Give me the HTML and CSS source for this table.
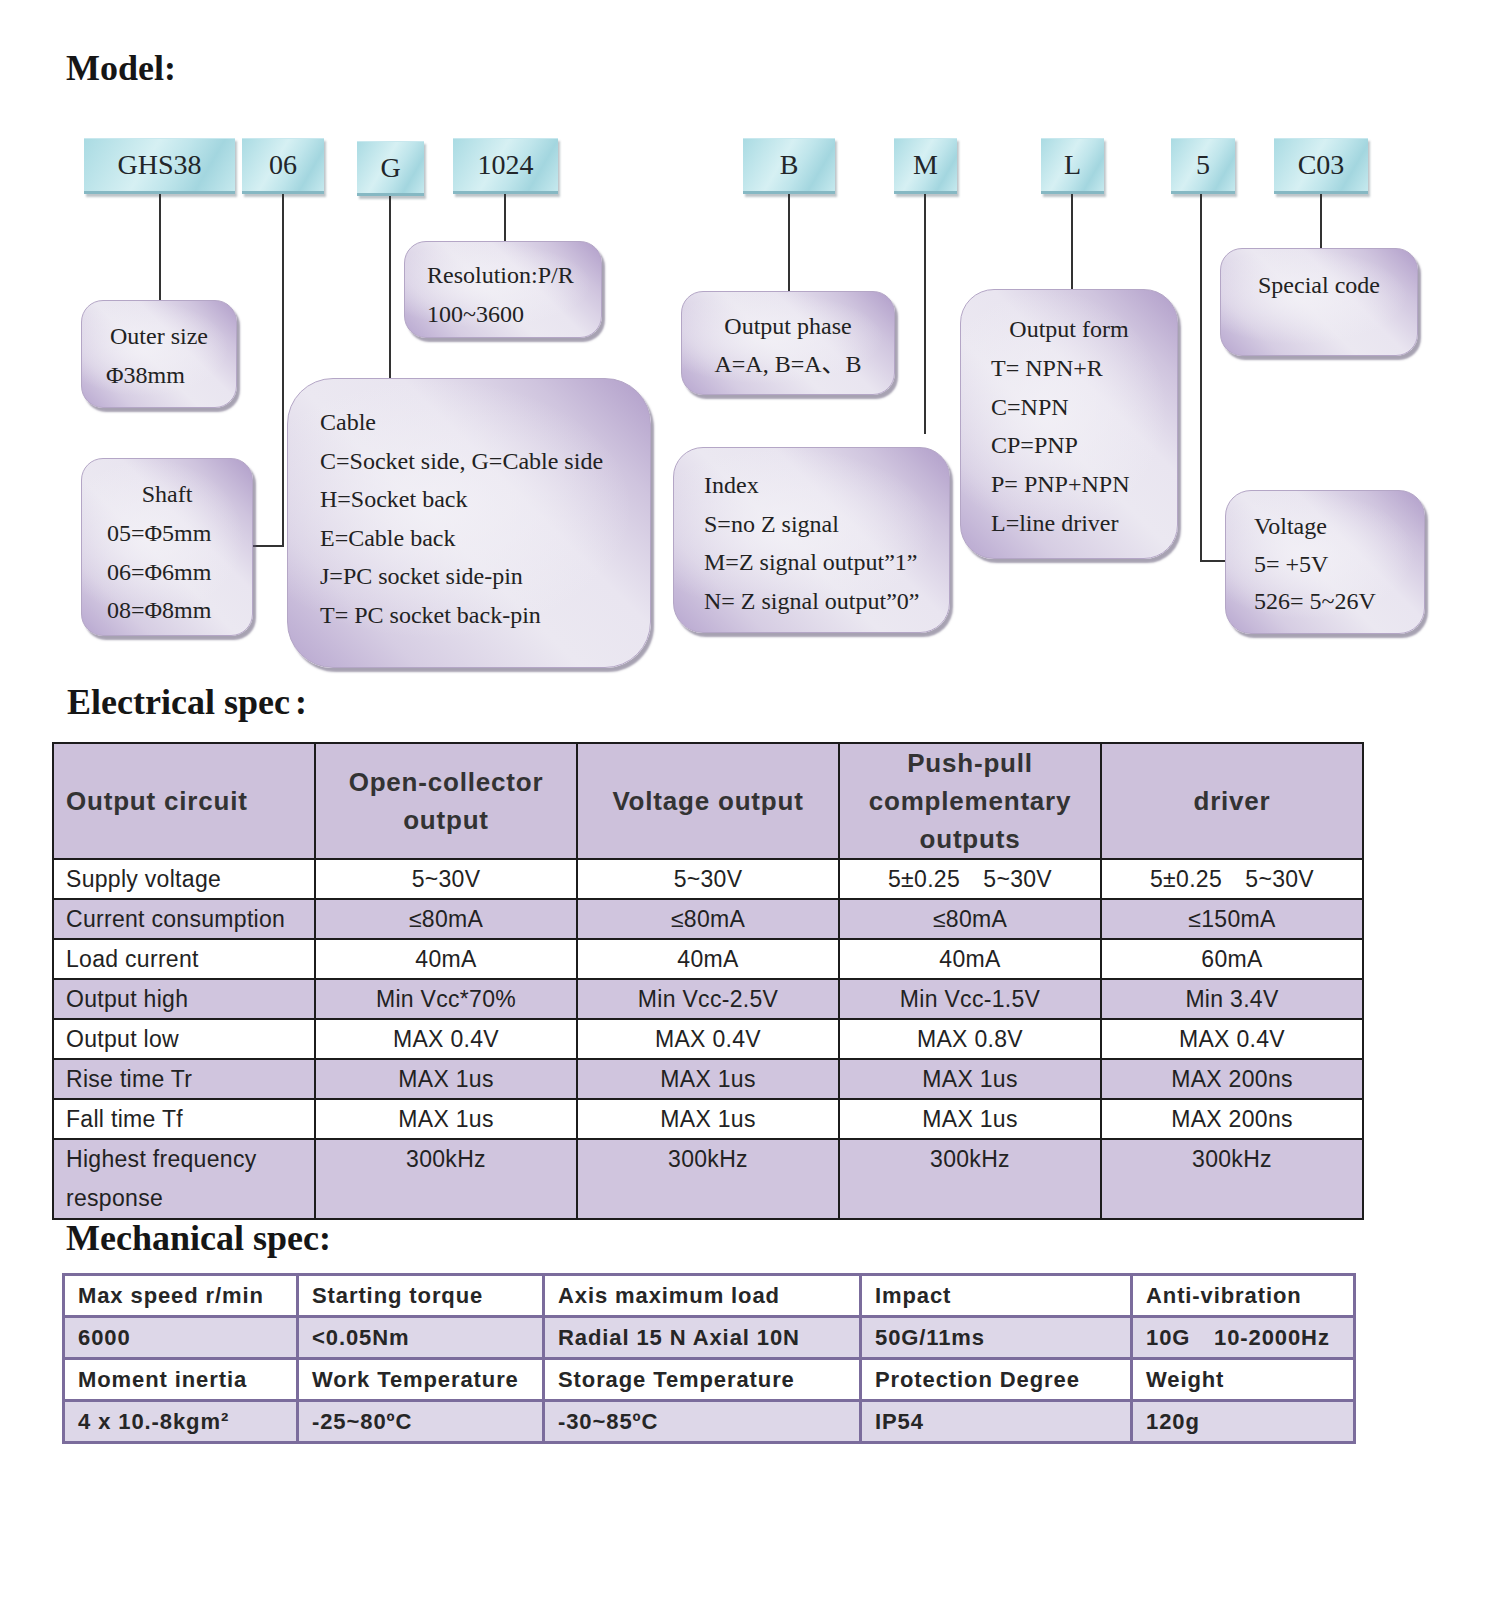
FILE: index.html
```html
<!DOCTYPE html>
<html lang="en">
<head>
<meta charset="utf-8">
<title>GHS38 encoder</title>
<link rel="stylesheet" href="styles.css">
</head>
<body>
<main class="page">
  <h1 class="heading heading-model">Model:</h1>

  <section class="diagram">
    <div class="code code-ghs">GHS38</div>
    <div class="code code-06">06</div>
    <div class="code code-g">G</div>
    <div class="code code-1024">1024</div>
    <div class="code code-b">B</div>
    <div class="code code-m">M</div>
    <div class="code code-l">L</div>
    <div class="code code-5">5</div>
    <div class="code code-c03">C03</div>

    <div class="vline vl-ghs"></div>
    <div class="vline vl-06"></div>
    <div class="hline hl-06"></div>
    <div class="vline vl-g"></div>
    <div class="vline vl-1024"></div>
    <div class="vline vl-b"></div>
    <div class="vline vl-m"></div>
    <div class="vline vl-l"></div>
    <div class="vline vl-5"></div>
    <div class="hline hl-5"></div>
    <div class="vline vl-c03"></div>

    <div class="note note-outer">
      <p class="c">Outer size</p>
      <p>Φ38mm</p>
    </div>
    <div class="note note-res">
      <p>Resolution:P/R</p>
      <p>100~3600</p>
    </div>
    <div class="note note-shaft">
      <p class="c">Shaft</p>
      <p>05=Φ5mm</p>
      <p>06=Φ6mm</p>
      <p>08=Φ8mm</p>
    </div>
    <div class="note note-cable">
      <p>Cable</p>
      <p>C=Socket side, G=Cable side</p>
      <p>H=Socket back</p>
      <p>E=Cable back</p>
      <p>J=PC socket side-pin</p>
      <p>T= PC socket back-pin</p>
    </div>
    <div class="note note-phase">
      <p class="c">Output phase</p>
      <p class="c">A=A, B=A、B</p>
    </div>
    <div class="note note-index">
      <p>Index</p>
      <p>S=no Z signal</p>
      <p>M=Z signal output”1”</p>
      <p>N= Z signal output”0”</p>
    </div>
    <div class="note note-form">
      <p class="c">Output form</p>
      <p>T= NPN+R</p>
      <p>C=NPN</p>
      <p>CP=PNP</p>
      <p>P= PNP+NPN</p>
      <p>L=line driver</p>
    </div>
    <div class="note note-special">
      <p class="c">Special code</p>
    </div>
    <div class="note note-volt">
      <p>Voltage</p>
      <p>5= +5V</p>
      <p>526= 5~26V</p>
    </div>
  </section>

  <h2 class="heading heading-elec">Electrical spec<span class="colon">:</span></h2>
  <table class="elec">
    <thead>
      <tr class="elec-head">
        <th class="first">Output circuit</th>
        <th>Open-collector<br>output</th>
        <th>Voltage output</th>
        <th>Push-pull<br>complementary<br>outputs</th>
        <th>driver</th>
      </tr>
    </thead>
    <tbody>
      <tr><td class="first">Supply voltage</td><td>5~30V</td><td>5~30V</td><td>5±0.25&emsp;5~30V</td><td>5±0.25&emsp;5~30V</td></tr>
      <tr class="alt"><td class="first">Current consumption</td><td>≤80mA</td><td>≤80mA</td><td>≤80mA</td><td>≤150mA</td></tr>
      <tr><td class="first">Load current</td><td>40mA</td><td>40mA</td><td>40mA</td><td>60mA</td></tr>
      <tr class="alt"><td class="first">Output high</td><td>Min Vcc*70%</td><td>Min Vcc-2.5V</td><td>Min Vcc-1.5V</td><td>Min 3.4V</td></tr>
      <tr><td class="first">Output low</td><td>MAX 0.4V</td><td>MAX 0.4V</td><td>MAX 0.8V</td><td>MAX 0.4V</td></tr>
      <tr class="alt"><td class="first">Rise time Tr</td><td>MAX 1us</td><td>MAX 1us</td><td>MAX 1us</td><td>MAX 200ns</td></tr>
      <tr><td class="first">Fall time Tf</td><td>MAX 1us</td><td>MAX 1us</td><td>MAX 1us</td><td>MAX 200ns</td></tr>
      <tr class="alt tall"><td class="first">Highest frequency<br>response</td><td>300kHz</td><td>300kHz</td><td>300kHz</td><td>300kHz</td></tr>
    </tbody>
  </table>

  <h2 class="heading heading-mech">Mechanical spec:</h2>
  <table class="mech">
    <colgroup>
      <col class="m1"><col class="m2"><col class="m3"><col class="m4"><col class="m5">
    </colgroup>
    <tbody>
      <tr><td>Max speed r/min</td><td>Starting torque</td><td>Axis maximum load</td><td>Impact</td><td>Anti-vibration</td></tr>
      <tr class="alt"><td>6000</td><td>&lt;0.05Nm</td><td>Radial 15 N Axial 10N</td><td>50G/11ms</td><td>10G&ensp;&ensp;10-2000Hz</td></tr>
      <tr><td>Moment inertia</td><td>Work Temperature</td><td>Storage Temperature</td><td>Protection Degree</td><td>Weight</td></tr>
      <tr class="alt"><td>4 x 10.-8kgm²</td><td>-25~80ºC</td><td>-30~85ºC</td><td>IP54</td><td>120g</td></tr>
    </tbody>
  </table>
</main>
</body>
</html>
```

FILE: styles.css
```css
* { box-sizing: border-box; }

html, body {
  margin: 0;
  padding: 0;
  background: #ffffff;
}

.page {
  width: 1489px;
  min-height: 1600px;
  position: relative;
  font-family: "Liberation Serif", "Noto Sans CJK SC", serif;
  color: #1e1e1e;
}

.heading {
  margin: 0;
  font-family: "Liberation Serif", "Noto Sans CJK SC", serif;
  font-weight: bold;
  font-size: 36px;
  line-height: 36px;
  color: #161616;
}

.heading-model {
  padding-top: 50px;
  margin-left: 66px;
  margin-bottom: 34px;
}

.heading-elec {
  margin-left: 67px;
  margin-bottom: 22px;
}

.heading-elec .colon {
  margin-left: 5px;
}

.heading-mech {
  margin-left: 66px;
  margin-bottom: 17px;
}

/* ---------- diagram ---------- */
.diagram {
  position: relative;
  height: 564px;
}

.code {
  position: absolute;
  top: 18px;
  height: 56px;
  display: flex;
  align-items: center;
  justify-content: center;
  font-size: 28px;
  color: #22262a;
  background:
    linear-gradient(120deg, #aadbe3 0%, #d6f0f3 42%, #bfe5eb 60%, #a3d6df 78%, #c6e9ee 100%);
  border-top: 1px solid #c8e8ee;
  border-bottom: 3px solid #86b8c3;
  box-shadow: 2px 3px 2px rgba(70, 90, 100, 0.35);
}

.code-ghs { left: 84px; width: 151px; }
.code-06 { left: 242px; width: 82px; }
.code-g { left: 357px; width: 67px; top: 21px; height: 55px; }
.code-1024 { left: 453px; width: 105px; }
.code-b { left: 743px; width: 92px; }
.code-m { left: 894px; width: 63px; }
.code-l { left: 1041px; width: 63px; }
.code-5 { left: 1171px; width: 64px; }
.code-c03 { left: 1274px; width: 94px; }

.vline {
  position: absolute;
  width: 2px;
  background: #333333;
}

.hline {
  position: absolute;
  height: 2px;
  background: #333333;
}

.vl-ghs { left: 159px; top: 74px; height: 107px; }
.vl-06 { left: 282px; top: 74px; height: 353px; }
.hl-06 { left: 253px; top: 425px; width: 31px; }
.vl-g { left: 389px; top: 76px; height: 182px; }
.vl-1024 { left: 504px; top: 74px; height: 48px; }
.vl-b { left: 788px; top: 74px; height: 98px; }
.vl-m { left: 924px; top: 74px; height: 240px; }
.vl-l { left: 1071px; top: 74px; height: 96px; }
.vl-5 { left: 1200px; top: 74px; height: 368px; }
.hl-5 { left: 1200px; top: 440px; width: 26px; }
.vl-c03 { left: 1320px; top: 74px; height: 55px; }

.note {
  position: absolute;
  font-size: 24px;
  line-height: 39px;
  color: #222222;
  border-radius: 22px;
  border: 1px solid #b4a6c6;
  background:
    radial-gradient(ellipse 55% 45% at 40% 45%, rgba(242, 240, 246, 0.9) 0%, rgba(242, 240, 246, 0) 100%),
    linear-gradient(45deg, #b7a6cf 0%, #d6cde3 20%, #ebe8f1 45%, #e9e5f0 62%, #cfc4de 82%, #b09dc9 100%);
  box-shadow: 3px 4px 2px rgba(95, 85, 115, 0.55);
}

.note p {
  margin: 0;
  white-space: nowrap;
}

.note p.c {
  text-align: center;
}

.note-outer { left: 81px; top: 180px; width: 156px; height: 108px; padding: 16px 0 0 24px; }
.note-outer p.c { margin-left: -24px; }

.note-res { left: 404px; top: 121px; width: 198px; height: 97px; padding: 14px 0 0 22px; }

.note-shaft { left: 81px; top: 338px; width: 172px; height: 178px; padding: 16px 0 0 25px; line-height: 38.8px; }
.note-shaft p.c { margin-left: -25px; }

.note-cable { left: 287px; top: 258px; width: 364px; height: 290px; padding: 24px 0 0 32px; line-height: 38.6px; border-radius: 46px; }

.note-phase { left: 681px; top: 171px; width: 214px; height: 104px; padding-top: 15px; line-height: 38px; }

.note-index { left: 673px; top: 327px; width: 277px; height: 186px; padding: 18px 0 0 30px; line-height: 38.7px; border-radius: 30px; }

.note-form { left: 960px; top: 169px; width: 218px; height: 270px; padding: 20px 0 0 30px; line-height: 38.8px; border-radius: 34px; }
.note-form p.c { margin-left: -30px; }

.note-special { left: 1220px; top: 128px; width: 198px; height: 108px; padding-top: 17px; }

.note-volt { left: 1225px; top: 370px; width: 200px; height: 144px; padding: 17px 0 0 28px; line-height: 37.5px; border-radius: 26px; }

/* ---------- electrical table ---------- */
.elec {
  margin-left: 52px;
  width: 1312px;
  table-layout: fixed;
  border-collapse: collapse;
  font-family: "Liberation Sans", Arial, sans-serif;
  color: #222222;
}

.elec th,
.elec td {
  border: 2px solid #1c1c1c;
  padding: 0;
  text-align: center;
}

.elec-head {
  background: #cdc1db;
  height: 114px;
}

.elec th {
  font-size: 26px;
  letter-spacing: 0.8px;
  line-height: 38px;
  font-weight: bold;
  color: #333333;
}

.elec th.first,
.elec td.first {
  text-align: left;
  padding-left: 12px;
}

.elec td {
  font-size: 23px;
  letter-spacing: 0.3px;
  height: 40px;
  line-height: 38px;
  background: #ffffff;
}

.elec tr.alt td {
  background: #d0c5de;
}

.elec tr.tall td {
  height: 77px;
  vertical-align: top;
  line-height: 39px;
}

/* ---------- mechanical table ---------- */
.mech {
  margin-left: 62px;
  width: 1291px;
  table-layout: fixed;
  border-collapse: collapse;
  font-family: "Liberation Sans", Arial, sans-serif;
  font-weight: bold;
  font-size: 22px;
  letter-spacing: 0.9px;
  color: #262626;
}

.mech .m1 { width: 234px; }
.mech .m2 { width: 246px; }
.mech .m3 { width: 317px; }
.mech .m4 { width: 271px; }
.mech .m5 { width: 223px; }

.mech td {
  border: 3px solid #7b6c9c;
  height: 42px;
  padding: 0 0 0 13px;
  text-align: left;
  white-space: nowrap;
  background: #ffffff;
}

.mech tr.alt td {
  background: #ddd7e8;
}
```
